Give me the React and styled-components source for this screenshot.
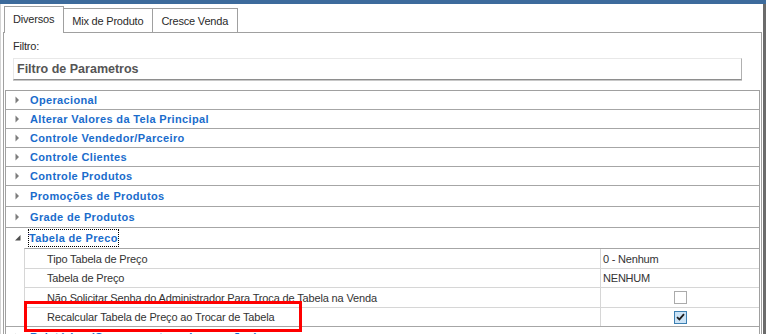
import React from "react";
import styled, { createGlobalStyle } from "styled-components";

const GlobalStyle = createGlobalStyle`
  html, body {
    margin: 0;
    padding: 0;
    background: #ffffff;
  }
  body {
    font-family: "Liberation Sans", Arial, sans-serif;
    font-size: 11px;
    color: #333333;
  }
`;

const categorias = [
  { titulo: "Operacional", h: 18 },
  { titulo: "Alterar Valores da Tela Principal", h: 18 },
  { titulo: "Controle Vendedor/Parceiro", h: 18 },
  { titulo: "Controle Clientes", h: 18 },
  { titulo: "Controle Produtos", h: 18 },
  { titulo: "Promoções de Produtos", h: 20 },
  { titulo: "Grade de Produtos", h: 20 },
];

const parametros = [
  { nome: "Tipo Tabela de Preço", valor: "0 - Nenhum", h: 19 },
  { nome: "Tabela de Preço", valor: "NENHUM", h: 18 },
  { nome: "Não Solicitar Senha do Administrador Para Troca de Tabela na Venda", check: false, h: 19 },
  { nome: "Recalcular Tabela de Preço ao Trocar de Tabela", check: true, h: 18, marcado: true },
];

const Seta = ({ aberto }) =>
  aberto ? (
    <svg width="6" height="6" viewBox="0 0 6 6">
      <polygon points="5.5,0 5.5,5.5 0,5.5" fill="#505050" />
    </svg>
  ) : (
    <svg width="5" height="8" viewBox="0 0 5 8">
      <polygon points="0.5,0.5 4,4 0.5,7.5" fill="#7c7c7c" />
    </svg>
  );

const Check = ({ marcado }) => (
  <S.Caixa $marcado={marcado}>
    {marcado && (
      <svg width="9" height="8" viewBox="0 0 9 8">
        <path d="M1 4.2 L3.4 6.4 L8 1.2" stroke="#1e1e1e" strokeWidth="1.8" fill="none" />
      </svg>
    )}
  </S.Caixa>
);

const App = () => {
  return (
    <>
      <GlobalStyle />
      <S.Janela>
        <S.BarraTopo />
        <S.Corpo>
          <S.Abas>
            <S.Aba $ativa>Diversos</S.Aba>
            <S.Aba>Mix de Produto</S.Aba>
            <S.Aba>Cresce Venda</S.Aba>
          </S.Abas>
          <S.Painel>
            <S.Filtro>
              <S.Rotulo>Filtro:</S.Rotulo>
              <S.Entrada>Filtro de Parametros</S.Entrada>
            </S.Filtro>
            <S.Grade>
              {categorias.map((c) => (
                <S.Categoria key={c.titulo} $h={c.h}>
                  <S.Icone><Seta /></S.Icone>
                  <S.Titulo>{c.titulo}</S.Titulo>
                </S.Categoria>
              ))}
              <S.Grupo>
                <S.Categoria $h={20} $semLinha>
                  <S.Icone><Seta aberto /></S.Icone>
                  <S.Titulo $foco>Tabela de Preco</S.Titulo>
                </S.Categoria>
                <S.Filhos>
                  {parametros.map((p) => (
                    <S.Linha key={p.nome} $h={p.h}>
                      <S.Nome>
                        {p.nome}
                        {p.marcado && <S.Destaque />}
                      </S.Nome>
                      <S.Valor $centro={p.check !== undefined}>
                        {p.check !== undefined ? <Check marcado={p.check} /> : p.valor}
                      </S.Valor>
                    </S.Linha>
                  ))}
                </S.Filhos>
              </S.Grupo>
              <S.Categoria $h={20}>
                <S.Icone><Seta /></S.Icone>
                <S.Titulo>Relatórios (Comprovantes e Impressões)</S.Titulo>
              </S.Categoria>
            </S.Grade>
          </S.Painel>
        </S.Corpo>
      </S.Janela>
    </>
  );
};

export default App;

const S = {
  Janela: styled.div`
    width: 766px;
    height: 334px;
    overflow: hidden;
    box-sizing: border-box;
    display: flex;
    flex-direction: column;
  `,
  BarraTopo: styled.div`
    height: 4px;
    flex-shrink: 0;
    background: #3d6b9c;
  `,
  Corpo: styled.div`
    flex: 1;
    box-sizing: border-box;
    border-left: 1px solid #d4d4d4;
    border-right: 3px solid #6b6b6b;
    padding: 0 1px 0 2px;
  `,
  Abas: styled.div`
    display: flex;
    align-items: flex-end;
    height: 28px;
    padding-left: 1px;
  `,
  Aba: styled.div`
    position: relative;
    display: flex;
    align-items: center;
    box-sizing: border-box;
    height: ${(p) => (p.$ativa ? "27px" : "24px")};
    margin-bottom: ${(p) => (p.$ativa ? "-1px" : "0")};
    padding: ${(p) => (p.$ativa ? "0 9px 3px 8px" : "0 9px 0 8px")};
    margin-left: -1px;
    border: 1px solid #a0a0a0;
    border-bottom: none;
    background: #ffffff;
    z-index: ${(p) => (p.$ativa ? 2 : 1)};
    color: #2a2a2a;
    letter-spacing: -0.2px;
    white-space: nowrap;
    &:first-child {
      margin-left: 0;
    }
  `,
  Painel: styled.div`
    box-sizing: border-box;
    height: 310px;
    border: 1px solid #a0a0a0;
    border-bottom: none;
    padding: 0 1px;
  `,
  Filtro: styled.div`
    padding: 6px 18px 10px 8px;
  `,
  Rotulo: styled.div`
    height: 14px;
    line-height: 14px;
    margin-bottom: 5px;
    color: #2a2a2a;
    letter-spacing: -0.2px;
  `,
  Entrada: styled.div`
    box-sizing: border-box;
    height: 22px;
    display: flex;
    align-items: center;
    padding-left: 3px;
    border-top: 1px solid #e8e8e8;
    border-left: 1px solid #e8e8e8;
    border-right: 1px solid #b0b0b0;
    border-bottom: 1px solid #8e8e8e;
    box-shadow: 0 1px 0 #c8c8c8;
    font-size: 12.5px;
    font-weight: bold;
    color: #555555;
  `,
  Grade: styled.div`
    border: 1px solid #a0a0a0;
    border-bottom: none;
  `,
  Categoria: styled.div`
    display: flex;
    align-items: center;
    height: ${(p) => p.$h}px;
    border-bottom: ${(p) => (p.$semLinha ? "none" : "1px solid #a6a6a6")};
  `,
  Icone: styled.div`
    width: 23px;
    flex-shrink: 0;
    display: flex;
    align-items: center;
    padding-left: 9px;
    box-sizing: border-box;
  `,
  Titulo: styled.span`
    font-weight: bold;
    color: #1a6ccc;
    letter-spacing: 0.35px;
    white-space: nowrap;
    padding: 1px 0;
    margin-left: ${(p) => (p.$foco ? "-1px" : "0")};
    border: ${(p) => (p.$foco ? "1px dotted #000000" : "1px solid transparent")};
    line-height: 14px;
  `,
  Grupo: styled.div`
    border-bottom: 1px solid #a6a6a6;
  `,
  Filhos: styled.div`
    margin-left: 18px;
  `,
  Linha: styled.div`
    display: grid;
    grid-template-columns: 575px 1fr;
    height: ${(p) => p.$h}px;
    border-top: 1px solid #d6d6d6;
    border-left: 1px solid #d6d6d6;
    &:first-child {
      border-top-color: #a6a6a6;
    }
  `,
  Nome: styled.div`
    position: relative;
    display: flex;
    align-items: center;
    padding-left: 22px;
    color: #333333;
    letter-spacing: -0.15px;
    white-space: nowrap;
  `,
  Valor: styled.div`
    display: flex;
    align-items: center;
    justify-content: ${(p) => (p.$centro ? "center" : "flex-start")};
    padding-left: ${(p) => (p.$centro ? "0" : "2px")};
    border-left: 1px solid #d6d6d6;
    color: #333333;
    letter-spacing: -0.2px;
  `,
  Caixa: styled.div`
    box-sizing: border-box;
    width: 13px;
    height: 13px;
    display: flex;
    align-items: center;
    justify-content: center;
    background: ${(p) => (p.$marcado ? "#cce4f7" : "#ffffff")};
    border: 1px solid ${(p) => (p.$marcado ? "#3c7fb1" : "#ababab")};
  `,
  Destaque: styled.div`
    position: absolute;
    left: -1px;
    top: -7px;
    width: 278px;
    height: 31px;
    box-sizing: border-box;
    border: 3px solid #ff0000;
    pointer-events: none;
  `,
};
